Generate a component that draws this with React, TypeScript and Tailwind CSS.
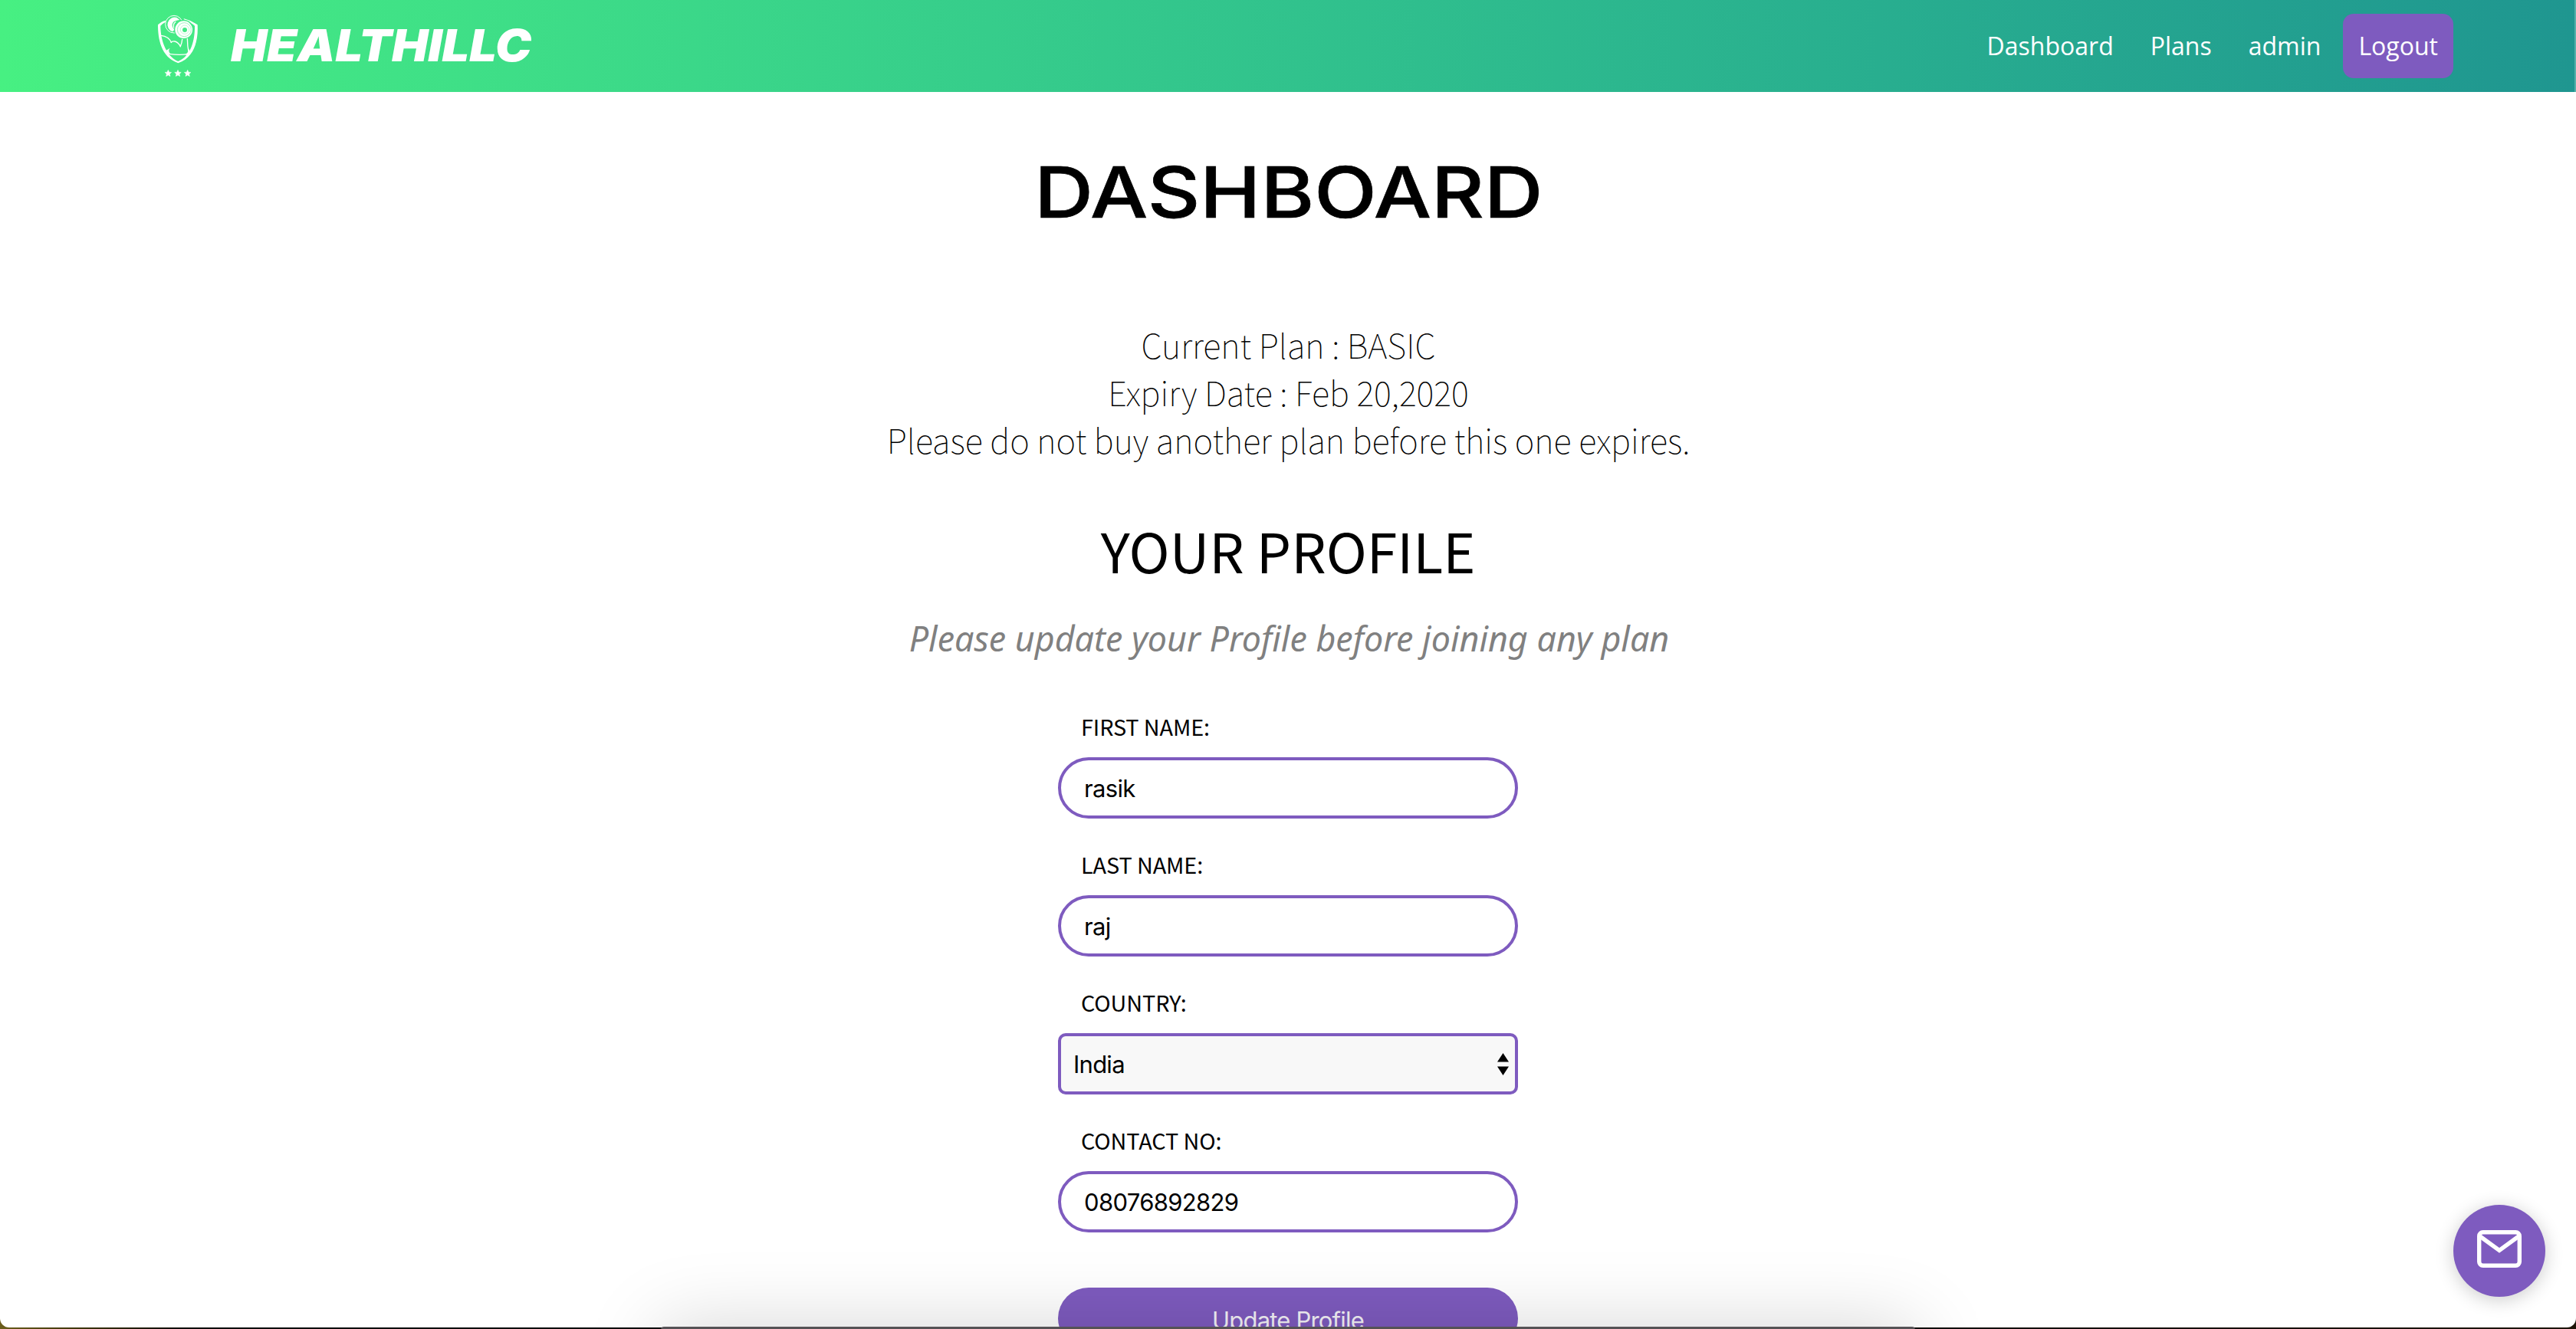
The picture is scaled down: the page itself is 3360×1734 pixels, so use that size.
import type { ReactNode } from "react";

const STAR = "M0 -13 L3.8 -4.6 L12.8 -3.8 L6 2.4 L8 11.6 L0 6.8 L-8 11.6 L-6 2.4 L-12.8 -3.8 L-3.8 -4.6 Z";

/** Shield crest with a flexed arm lifting a dumbbell and three stars below. */
function Crest() {
  return (
    <svg viewBox="0 0 240 300" className="h-[100px] w-[80px] shrink-0" fill="none" stroke="white">
      <path
        fill="white"
        stroke="none"
        d="M64 50 Q46 54 33 67 C33 120 44 194 112 217 C180 194 191 120 188 67 Q164 50 133 42 L140 52 Q162 57 177 71 C178 120 166 188 112 210 C66 190 43 130 43 71 Q51 62 61 58 Z"
      />
      <path strokeWidth="4" d="M45 109 Q76 112 86 138 M83 137 Q88 130 99 132 Q112 135 121 151" />
      <path strokeWidth="4" d="M129 119 Q127 140 120 154 M148 119 Q148 150 154 178" />
      <path strokeWidth="4" d="M77 181 Q115 187 151 182" />
      <path fill="white" stroke="none" d="M60 171 L80 158 Q70 170 84 183 Q70 182 60 171 Z M155 160 L158 178 Q150 188 140 183 Q152 178 155 160 Z" />
      <circle cx="96" cy="65" r="34" strokeWidth="3" />
      <path fill="white" stroke="none" d="M107 39 A28 28 0 1 0 91 94 L97 86 Q84 72 92 58 Q98 50 118 48 Z" />
      <path strokeWidth="4" d="M103 55 Q88 66 98 82" />
      <circle cx="134" cy="85" r="38" stroke="none" className="fill-[#44e886]" />
      <circle cx="134" cy="86" r="34" fill="white" stroke="none" />
      <circle cx="136" cy="86" r="27" strokeWidth="2" className="stroke-[#6eeea1]" />
      <circle cx="138" cy="86" r="17" strokeWidth="2" className="stroke-[#a4f5c4]" />
      <circle cx="138" cy="87" r="9" stroke="none" className="fill-[#44e886]" />
      {[73, 111, 149].map((x) => (
        <path key={x} d={STAR} transform={`translate(${x} 257)`} fill="white" stroke="white" strokeWidth="1.5" />
      ))}
    </svg>
  );
}

function Header() {
  return (
    <header className="flex h-[120px] shrink-0 items-center justify-between border-r-2 border-[#55b0aa] bg-linear-to-r from-[#47f082] to-[#1f9690] pr-[158px] pl-[195px] text-white">
      <div className="flex items-center">
        <Crest />
        <span className="ml-[26px] origin-left -translate-y-px scale-x-[1.092] font-['Inter',sans-serif] text-[57.7px] leading-[80px] font-black italic">
          HEALTHILLC
        </span>
      </div>
      <nav className="flex items-center gap-12 font-['Open_Sans',sans-serif] text-[32px] leading-[84px]">
        <a>Dashboard</a>
        <a>Plans</a>
        <a>admin</a>
        <a className="-ml-[19px] h-[84px] rounded-[14px] bg-[#7e5bbf] px-5">Logout</a>
      </nav>
    </header>
  );
}

function Field({ label, children }: { label: string; children: ReactNode }) {
  return (
    <label className="flex flex-col gap-[19px]">
      <span className="pl-[30px] font-['Noto_Sans_CJK_JP',sans-serif] text-[28.8px] leading-[43px] tracking-[-0.1px]">{label}</span>
      {children}
    </label>
  );
}

function TextInput({ value }: { value: string }) {
  return (
    <input
      readOnly
      value={value}
      className="h-20 w-full rounded-full border-4 border-[#7e5bbf] bg-white px-[30px] font-['Inter',sans-serif] text-[31px] tracking-[-0.65px] text-black outline-none"
    />
  );
}

export default function App() {
  return (
    <div className="relative h-[1734px] w-full overflow-hidden bg-linear-to-r from-[#6b5d1c] via-black via-10% to-[#1d1408]">
      <div className="flex h-[1732px] flex-col overflow-hidden rounded-b-[12px] bg-white text-black">
        <Header />
        <main className="flex shrink-0 flex-col items-center text-center">
          <h1 className="mt-[70px] ml-px scale-x-[1.148] font-['Inter',sans-serif] text-[92.5px] leading-[120px] font-medium [-webkit-text-stroke:0.7px_black]">
            DASHBOARD
          </h1>
          <div className="mt-[108px] ml-px font-['Noto_Sans_CJK_JP',sans-serif] text-[43.6px] leading-[62px] font-thin">
            <p>Current Plan : BASIC</p>
            <p>Expiry Date : Feb 20,2020</p>
            <p>Please do not buy another plan before this one expires.</p>
          </div>
          <h2 className="mt-[63px] font-['Noto_Sans_CJK_JP',sans-serif] text-[71.6px] leading-[100px]">
            YOUR PROFILE
          </h2>
          <p className="mt-[34px] ml-[3px] font-['Noto_Sans',sans-serif] text-[44.8px] leading-[64px] text-[#808080] italic">
            Please update your Profile before joining any plan
          </p>
          <form className="mt-[61px] flex w-[600px] flex-col gap-[38px] text-left">
            <Field label="FIRST NAME:">
              <TextInput value="rasik" />
            </Field>
            <Field label="LAST NAME:">
              <TextInput value="raj" />
            </Field>
            <Field label="COUNTRY:">
              <div className="flex h-20 items-center justify-between rounded-[10px] border-4 border-[#7e5bbf] bg-[#f8f8f8] pr-[8px] pl-[16px] font-['Inter',sans-serif] text-[31px] tracking-[-0.75px]">
                <span className="pt-0.5">India</span>
                <svg viewBox="0 0 15 29" className="h-[29px] w-[15px]">
                  <path d="M7.5 0 L15 11.5 H0 Z M0 17.5 H15 L7.5 29 Z" />
                </svg>
              </div>
            </Field>
            <Field label="CONTACT NO:">
              <TextInput value="08076892829" />
            </Field>
            <button
              type="button"
              className="mt-[34px] h-20 rounded-full bg-[#7e5bbf] pt-[5px] font-['Inter',sans-serif] text-[31px] leading-[75px] font-normal tracking-[-0.8px] text-[#f5f3f8]"
            >
              Update Profile
            </button>
          </form>
        </main>
      </div>

      {/* Floating contact button */}
      <button
        type="button"
        aria-label="Contact"
        className="absolute top-[1572px] right-[40px] flex size-[120px] items-center justify-center rounded-full bg-[#7e5bbf] shadow-[0_4px_24px_rgba(0,0,0,0.2)]"
      >
        <svg viewBox="0 0 58 49" className="-mt-[6px] h-[49px] w-[58px]" fill="none" stroke="white" strokeWidth="5.4" strokeLinejoin="round">
          <rect x="2.7" y="2.7" width="52.6" height="43.6" rx="5" />
          <path d="M3 7.5 L29 26.5 L55 7.5" strokeLinejoin="miter" />
        </svg>
      </button>

      {/* Top edge of the dock with its soft shadow */}
      <div className="absolute top-[1731px] left-[862px] h-[120px] w-[1636px] rounded-[4px] bg-[#555255] shadow-[0_0_100px_rgba(0,0,0,0.17)]" />
    </div>
  );
}
